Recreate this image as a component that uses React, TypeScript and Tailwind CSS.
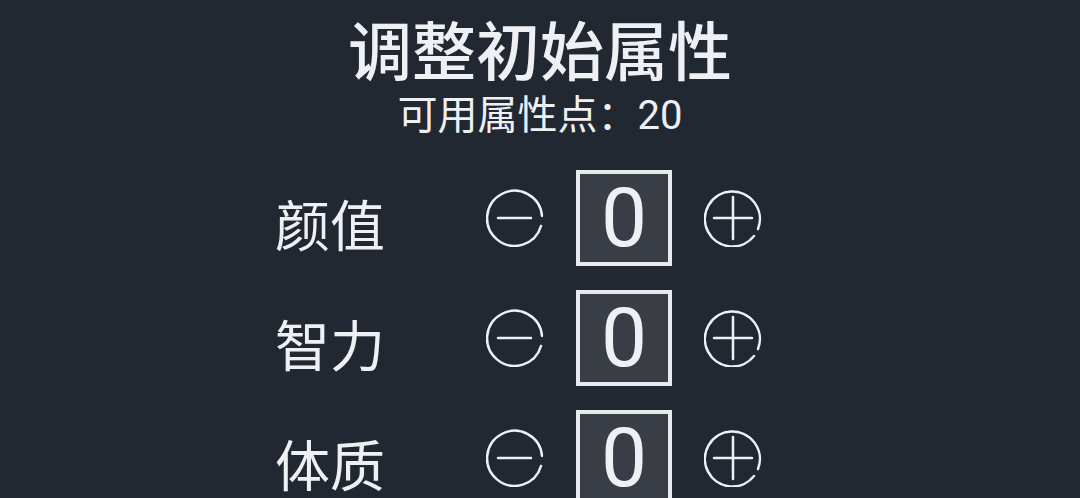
const stats = ["颜值", "智力", "体质"];

function MinusIcon() {
  return (
    <svg width="58" height="58" viewBox="0 0 58 58" fill="none" stroke="#eef0f4" strokeWidth="2.5" strokeLinecap="round">
      <path d="M56 27 A27.5 27.5 0 1 0 55 37" />
      <line x1="12" y1="29" x2="45" y2="29" />
    </svg>
  );
}

function PlusIcon() {
  return (
    <svg width="58" height="58" viewBox="0 0 58 58" fill="none" stroke="#eef0f4" strokeWidth="2.5" strokeLinecap="round">
      <path d="M54 40 A27.5 27.5 0 1 0 50 47" />
      <line x1="10" y1="29" x2="48" y2="29" />
      <line x1="29" y1="8" x2="29" y2="50" />
    </svg>
  );
}

function StatRow({ name }: { name: string }) {
  return (
    <div className="flex items-center h-[96px]">
      <div className="w-[211px] text-[55px] leading-none pt-[8px]">{name}</div>
      <MinusIcon />
      <div className="ml-[32px] w-[96px] h-[96px] border-4 border-[#e9eaee] bg-[#393d46] flex items-center justify-center overflow-hidden">
        <span className="text-[82px] leading-none" style={{ fontFamily: 'Roboto, "Noto Sans", sans-serif' }}>0</span>
      </div>
      <div className="ml-[32px]">
        <PlusIcon />
      </div>
    </div>
  );
}

export default function App() {
  return (
    <div
      className="w-[1080px] h-[498px] overflow-hidden bg-[#222831] text-[#eef0f4]"
      style={{ fontFamily: '"Noto Sans CJK SC", "Noto Sans", sans-serif' }}
    >
      <div className="flex flex-col items-center pt-[12px]">
        <h1 className="text-[64px] leading-[70px] font-medium">调整初始属性</h1>
        <div className="mt-[8px] text-[40px] leading-[44px]">
          可用属性点：<span style={{ fontFamily: 'Roboto, sans-serif' }}>20</span>
        </div>
      </div>
      <div className="pl-[275px] mt-[32px] flex flex-col gap-[24px]">
        {stats.map((s) => (
          <StatRow key={s} name={s} />
        ))}
      </div>
    </div>
  );
}
